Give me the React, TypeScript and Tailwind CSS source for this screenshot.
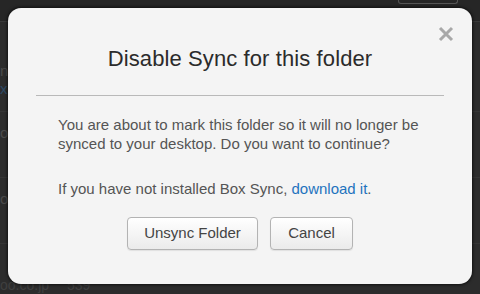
import React from 'react'

const rows = [
  { h: 62, text: 'ny', sub: 'x' },
  { h: 66, text: 'oo' },
  { h: 66, text: 'oo' },
]

const App = () => {
  return (
    <div className="relative w-[480px] h-[294px] overflow-hidden bg-[#2c2c2c] font-['Liberation_Sans',Arial,sans-serif]">
      {/* page behind the dialog */}
      <div className="flex flex-col">
        <div className="h-[22px] border-b border-[#3a3a3a] bg-[#262626] flex justify-end pr-[22px]">
          <div className="w-[60px] h-[4px] border border-t-0 border-[#555] rounded-b-[3px]" />
        </div>
        <div className="h-[28px]" />
        {rows.map((r, i) => (
          <div key={i} className="flex flex-col border-b border-[#353535]" style={{ height: r.h }}>
            <span className="text-[15px] leading-[18px] text-[#4a4a4a] mt-[12px]">{r.text}</span>
            {r.sub && <span className="text-[15px] leading-[18px] text-[#2c4a66]">{r.sub}</span>}
          </div>
        ))}
        <div className="flex gap-[18px] mt-[33px] text-[14px] leading-[16px] text-[#3f3f3f]">
          <span>oo.co.jp</span>
          <span>539</span>
        </div>
      </div>

      {/* dialog */}
      <div className="absolute left-[8px] top-[8px] w-[464px] h-[276px] rounded-[13px] bg-[#f4f4f4] shadow-[0_0_3px_1px_rgba(0,0,0,0.6)] flex flex-col items-center">
        <button className="absolute right-[17px] top-[17px] w-[18px] h-[18px] flex items-center justify-center">
          <svg width="16" height="16" viewBox="0 0 16 16">
            <path d="M2 2L14 14M14 2L2 14" stroke="#a8a8a8" strokeWidth="3" strokeLinecap="butt" />
          </svg>
        </button>
        <h1 className="mt-[37px] text-[22px] leading-[28px] text-[#2b2b2b] tracking-[0.1px]">Disable Sync for this folder</h1>
        <div className="mt-[22px] w-[408px] h-px bg-[#b9b9b9]" />
        <div className="mt-[19px] w-[408px] px-[22px] text-[15px] leading-[19px] text-[#555]">
          <p>You are about to mark this folder so it will no longer be synced to your desktop. Do you want to continue?</p>
          <p className="mt-[26px]">
            If you have not installed Box Sync, <a className="text-[#1e73be]">download it</a>.
          </p>
        </div>
        <div className="mt-[19px] flex gap-[12px]">
          <button className="h-[33px] w-[131px] rounded-[4px] border border-[#b3b3b3] bg-gradient-to-b from-white to-[#ebebeb] shadow-[0_1px_1px_rgba(0,0,0,0.08)] text-[15px] text-[#444]">
            Unsync Folder
          </button>
          <button className="h-[33px] w-[83px] rounded-[4px] border border-[#b3b3b3] bg-gradient-to-b from-white to-[#ebebeb] shadow-[0_1px_1px_rgba(0,0,0,0.08)] text-[15px] text-[#444]">
            Cancel
          </button>
        </div>
      </div>
    </div>
  )
}

export default App
